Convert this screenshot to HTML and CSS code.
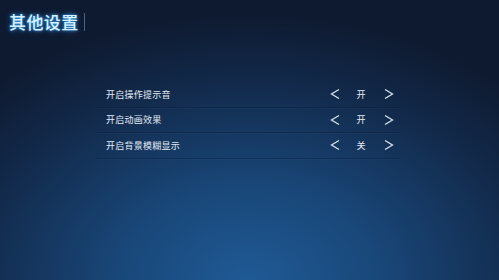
FILE: index.html
```html
<!DOCTYPE html>
<html lang="zh-CN">
<head>
    <meta charset="UTF-8">
    <meta name="viewport" content="width=device-width, initial-scale=1.0">
    <title>其他设置</title>
    <link rel="stylesheet" href="styles.css">
</head>
<body>
    <div class="header">
        <h1>其他设置</h1>
        <span class="divider"></span>
    </div>

    <div class="settings">
        <div class="row">
            <span class="label">开启操作提示音</span>
            <div class="switch">
                <span class="arrow"><svg viewBox="0 0 10 12"><polyline points="9,1.5 1.5,6 9,10.5"/></svg></span>
                <span class="value">开</span>
                <span class="arrow"><svg viewBox="0 0 10 12"><polyline points="1,1.5 8.5,6 1,10.5"/></svg></span>
            </div>
        </div>
        <div class="row">
            <span class="label">开启动画效果</span>
            <div class="switch">
                <span class="arrow"><svg viewBox="0 0 10 12"><polyline points="9,1.5 1.5,6 9,10.5"/></svg></span>
                <span class="value">开</span>
                <span class="arrow"><svg viewBox="0 0 10 12"><polyline points="1,1.5 8.5,6 1,10.5"/></svg></span>
            </div>
        </div>
        <div class="row">
            <span class="label">开启背景模糊显示</span>
            <div class="switch">
                <span class="arrow"><svg viewBox="0 0 10 12"><polyline points="9,1.5 1.5,6 9,10.5"/></svg></span>
                <span class="value">关</span>
                <span class="arrow"><svg viewBox="0 0 10 12"><polyline points="1,1.5 8.5,6 1,10.5"/></svg></span>
            </div>
        </div>
    </div>
</body>
</html>
```

FILE: styles.css
```css
html, body {
    height: 100%;
}
body {
    margin: 0;
    font-family: "Noto Sans CJK SC", "Noto Sans", sans-serif;
    color: #e4ecf5;
    background: radial-gradient(ellipse 75% 95% at 50% 100%, #1f5a95 0%, #194779 35%, #12294a 75%, #0e1a30 100%);
    overflow: hidden;
}
.header {
    display: flex;
    align-items: center;
    padding: 10px 0 0 9px;
}
.header h1 {
    margin: 0;
    font-size: 17px;
    line-height: 24px;
    font-weight: 500;
    letter-spacing: 0.4px;
    color: #d4f1ff;
    text-shadow: 0 0 3px #3aa8ff, 0 0 6px rgba(60, 160, 255, 0.6);
}
.divider {
    width: 1px;
    height: 18px;
    margin-left: 5px;
    background: rgba(150, 190, 220, 0.45);
}
.settings {
    width: 305px;
    margin: 48px 0 0 95px;
}
.row {
    display: flex;
    align-items: center;
    height: 24.5px;
    padding-left: 11px;
    border-bottom: 1px solid rgba(10, 25, 50, 0.4);
    box-shadow: 0 1px 0 rgba(80, 130, 190, 0.08);
}
.label {
    flex: 1;
    font-size: 9px;
    letter-spacing: 0.25px;
}
.switch {
    display: flex;
    align-items: center;
    margin-right: 4px;
}
.arrow {
    width: 14px;
    height: 13px;
    display: flex;
    align-items: center;
    justify-content: center;
}
.arrow svg {
    width: 10px;
    height: 12px;
    fill: none;
    stroke: #d6e2ef;
    stroke-width: 1.3;
}
.value {
    width: 38px;
    text-align: center;
    font-size: 9px;
    margin-right: 2px;
}
```
